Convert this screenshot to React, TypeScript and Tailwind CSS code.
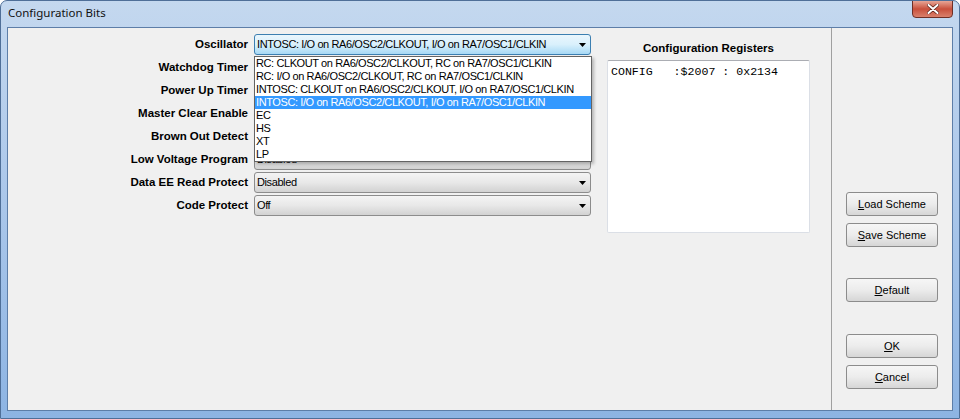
import React from 'react'

const LABELS = [
  'Oscillator',
  'Watchdog Timer',
  'Power Up Timer',
  'Master Clear Enable',
  'Brown Out Detect',
  'Low Voltage Program',
  'Data EE Read Protect',
  'Code Protect',
]

// rows 1-4 sit under the open list, so their values never show
const VALUES = [
  'INTOSC: I/O on RA6/OSC2/CLKOUT, I/O on RA7/OSC1/CLKIN',
  '',
  '',
  '',
  '',
  'Disabled',
  'Disabled',
  'Off',
]

const OPTIONS = [
  'RC: CLKOUT on RA6/OSC2/CLKOUT, RC on RA7/OSC1/CLKIN',
  'RC: I/O on RA6/OSC2/CLKOUT, RC on RA7/OSC1/CLKIN',
  'INTOSC: CLKOUT on RA6/OSC2/CLKOUT, I/O on RA7/OSC1/CLKIN',
  'INTOSC: I/O on RA6/OSC2/CLKOUT, I/O on RA7/OSC1/CLKIN',
  'EC',
  'HS',
  'XT',
  'LP',
]

const Arrow = () => (
  <svg width="7" height="4" viewBox="0 0 7 4" className="shrink-0">
    <path d="M0 0H7L3.5 4Z" fill="#000" />
  </svg>
)

const Combo = ({ value, focused }: { value: string; focused?: boolean }) => (
  <div
    className={
      focused
        ? 'w-[337px] h-[21px] flex items-center justify-between pl-[2px] pr-[4px] rounded-[3px] border border-[#3c7fb1] bg-gradient-to-b from-[#eaf6fd] via-[#d9f0fc] to-[#a7d9f5]'
        : 'w-[337px] h-[21px] flex items-center justify-between pl-[2px] pr-[4px] rounded-[3px] border border-[#8c8c8c] bg-gradient-to-b from-[#f4f4f4] via-[#e8e8e8] to-[#d2d2d2]'
    }
  >
    <span className="whitespace-nowrap text-[11px] tracking-[-0.4px]">{value}</span>
    <Arrow />
  </div>
)

const Btn = ({ u, rest }: { u: string; rest: string }) => (
  <button className="w-[92px] h-[24px] rounded-[3px] border border-[#8c8c8c] bg-gradient-to-b from-[#f6f6f6] via-[#ececec] to-[#d6d6d6] text-[11px] text-black">
    <span className="underline underline-offset-[1px]">{u}</span>
    {rest}
  </button>
)

export default function App() {
  return (
    <div className="w-[960px] h-[419px] flex flex-col overflow-hidden rounded-t-[7px] border border-[#4f6f98] bg-gradient-to-b from-[#c4d8ef] via-[#a9c6ea] to-[#8db4e3] font-['Liberation_Sans',sans-serif] text-[11.5px] text-black">
      <div className="h-[26px] flex justify-between pl-[7px] pr-[6px]">
        <span className="pt-[4px] text-[11.5px] font-['Noto_Sans',sans-serif] leading-[16px] text-[#111]">Configuration Bits</span>
        <div className="w-[41px] h-[18px] -mt-[1px] flex items-center justify-center rounded-b-[4px] border border-[#6e2f26] bg-gradient-to-b from-[#e6a596] via-[#c84f3b] to-[#d9806c]">
          <svg width="12" height="10" viewBox="0 0 12 10">
            <path d="M1.5 1L10.5 9M10.5 1L1.5 9" stroke="#5a2018" strokeWidth="3.4" strokeLinecap="round" />
            <path d="M1.5 1L10.5 9M10.5 1L1.5 9" stroke="#fff" strokeWidth="2" strokeLinecap="round" />
          </svg>
        </div>
      </div>
      <div className="flex-1 mx-[6px] mb-[7px] flex border border-[#5d7ea8] bg-[#f0f0f0]">
        <div className="flex-1 flex pt-[6px]">
          <div className="flex flex-col gap-[2px]">
            {LABELS.map((label, i) => (
              <div key={label} className="h-[21px] flex items-center gap-[6px]">
                <span className="w-[240px] text-right font-bold">{label}</span>
                <div className="relative">
                  <Combo value={VALUES[i]} focused={i === 0} />
                  {i === 0 && (
                    <div className="absolute left-0 top-[22px] z-10 w-[338px] border border-[#646464] bg-white shadow-[2px_2px_3px_rgba(0,0,0,0.25)] text-[11px] tracking-[-0.4px]">
                      {OPTIONS.map((opt, j) => (
                        <div
                          key={opt}
                          className={
                            j === 3
                              ? 'h-[13px] leading-[13px] pl-[1px] whitespace-nowrap bg-[#3399ff] text-white'
                              : 'h-[13px] leading-[13px] pl-[1px] whitespace-nowrap'
                          }
                        >
                          {opt}
                        </div>
                      ))}
                    </div>
                  )}
                </div>
              </div>
            ))}
          </div>
          <div className="ml-[16px] w-[203px] flex flex-col pt-[7px]">
            <div className="h-[14px] leading-[14px] text-center font-bold">Configuration Registers</div>
            <div className="mt-[5px] h-[173px] rounded-[2px] border border-[#dbdfe6] border-t-[#abadb3] bg-white pl-[3px] pt-[4px] font-['Liberation_Mono',monospace] text-[11.6px] leading-[14px] whitespace-pre">
              CONFIG   :$2007 : 0x2134
            </div>
          </div>
        </div>
        <div className="w-[121px] border-l border-[#a0a0a0] pl-[14px] pt-[164px] flex flex-col">
          <Btn u="L" rest="oad Scheme" />
          <div className="mt-[7px]"><Btn u="S" rest="ave Scheme" /></div>
          <div className="mt-[31px]"><Btn u="D" rest="efault" /></div>
          <div className="mt-[32px]"><Btn u="O" rest="K" /></div>
          <div className="mt-[7px]"><Btn u="C" rest="ancel" /></div>
        </div>
      </div>
    </div>
  )
}
